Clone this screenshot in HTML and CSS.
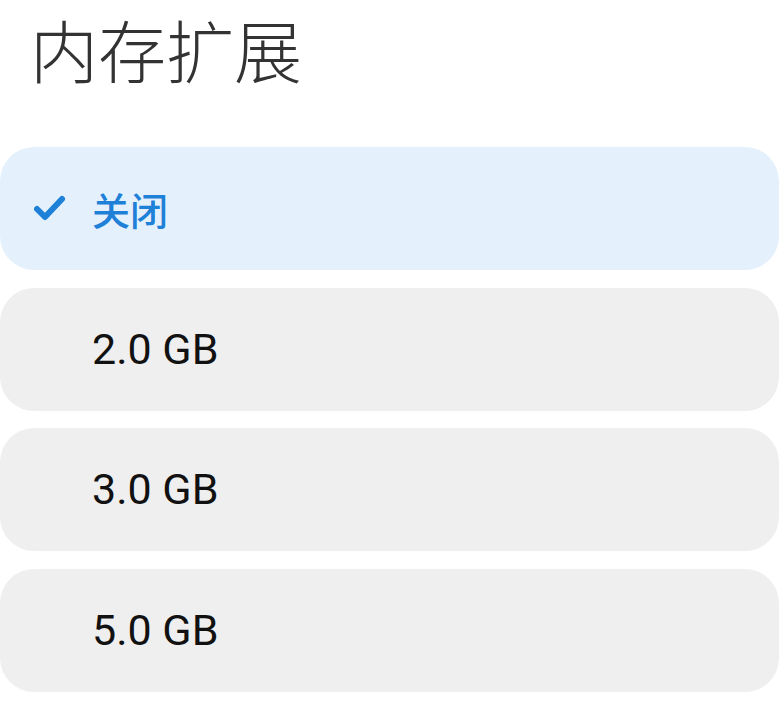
FILE: index.html
```html
<!DOCTYPE html>
<html lang="zh-CN">
<head>
<meta charset="utf-8">
<title>内存扩展</title>
<link rel="stylesheet" href="styles.css">
</head>
<body>
<div class="page">
  <header class="header">
    <h1 class="title">内存扩展</h1>
  </header>
  <ul class="options">
    <li class="option option--selected">
      <span class="lead">
        <svg class="check" width="32" height="28" viewBox="0 0 32 28" aria-hidden="true">
          <polyline points="3,14 11,22 28,4" fill="none" stroke="#1f80d8" stroke-width="6" stroke-linecap="round" stroke-linejoin="round"/>
        </svg>
      </span>
      <span class="label label--cjk">关闭</span>
    </li>
    <li class="option"><span class="lead"></span><span class="label">2.0 GB</span></li>
    <li class="option"><span class="lead"></span><span class="label">3.0 GB</span></li>
    <li class="option"><span class="lead"></span><span class="label">5.0 GB</span></li>
  </ul>
</div>
</body>
</html>
```

FILE: styles.css
```css
* { box-sizing: border-box; }
html, body {
  margin: 0;
  padding: 0;
  background: #ffffff;
}
.page {
  width: 779px;
  height: 709px;
  overflow: hidden;
  font-family: "Noto Sans CJK SC", "Noto Sans", sans-serif;
}
.header {
  height: 147px;
  padding: 9px 0 0 30px;
}
.title {
  margin: 0;
  font-size: 68px;
  line-height: 80px;
  font-weight: 300;
  color: #333333;
  letter-spacing: 0;
}
.options {
  list-style: none;
  margin: 0;
  padding: 0;
  display: flex;
  flex-direction: column;
  gap: 17.5px;
}
.option {
  height: 123px;
  border-radius: 34px;
  background: #efefef;
  display: flex;
  align-items: center;
}
.option--selected {
  background: #e4f1fd;
}
.lead {
  width: 92px;
  flex: none;
  display: flex;
  align-items: center;
  padding-left: 34px;
}
.check { display: block; }
.label {
  font-family: "Roboto", "Noto Sans", sans-serif;
  font-size: 43px;
  font-weight: 450;
  color: #111111;
  line-height: 1;
}
.label--cjk {
  font-family: "Noto Sans CJK SC", sans-serif;
  font-size: 38px;
  color: #1f80d8;
  font-weight: 500;
}
```
